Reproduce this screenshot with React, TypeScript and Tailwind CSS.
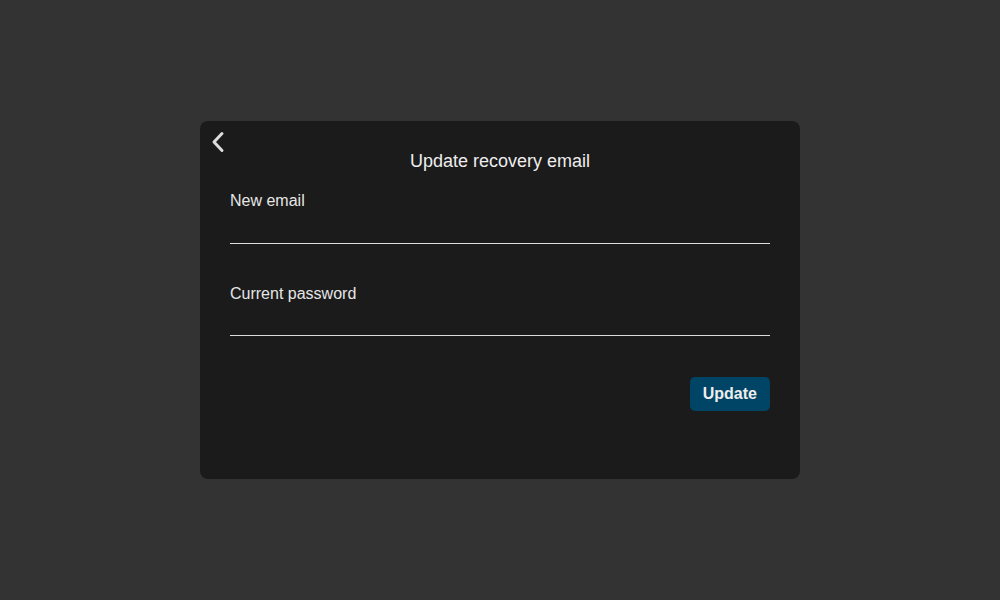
export default function App() {
  return (
    <div
      className="flex h-[600px] w-full items-center justify-center bg-[#333333]"
      style={{ fontFamily: '"Liberation Sans", Arial, sans-serif' }}
    >
      <div className="relative flex h-[358px] w-[600px] flex-col rounded-lg bg-[#1b1b1b] px-[30px] pt-[28px]">
        <button className="absolute left-[10px] top-[10px] text-[#dddddd]">
          <svg width="16" height="22" viewBox="0 0 16 22" fill="none" stroke="currentColor" strokeWidth="3" strokeLinecap="round" strokeLinejoin="round">
            <polyline points="12,2.5 4,11 12,19.5" />
          </svg>
        </button>
        <h1 className="text-center text-[18px] leading-[24px] text-[#eeeeee]">Update recovery email</h1>

        <label className="mt-[16px] block text-[16px] leading-[24px] text-[#e6e6e6]">New email</label>
        <input className="mt-[11px] h-[20px] w-full border-b border-[#dddddd] bg-transparent text-[#eee] outline-none" />

        <label className="mt-[38px] block text-[16px] leading-[24px] text-[#e6e6e6]">Current password</label>
        <input type="password" className="mt-[11px] h-[19px] w-full border-b border-[#dddddd] bg-transparent text-[#eee] outline-none" />

        <div className="mt-[41px] flex justify-end">
          <button className="h-[34px] rounded-[5px] bg-[#004466] px-[13px] text-[16px] font-bold text-[#eeeeee]">
            Update
          </button>
        </div>
      </div>
    </div>
  );
}
